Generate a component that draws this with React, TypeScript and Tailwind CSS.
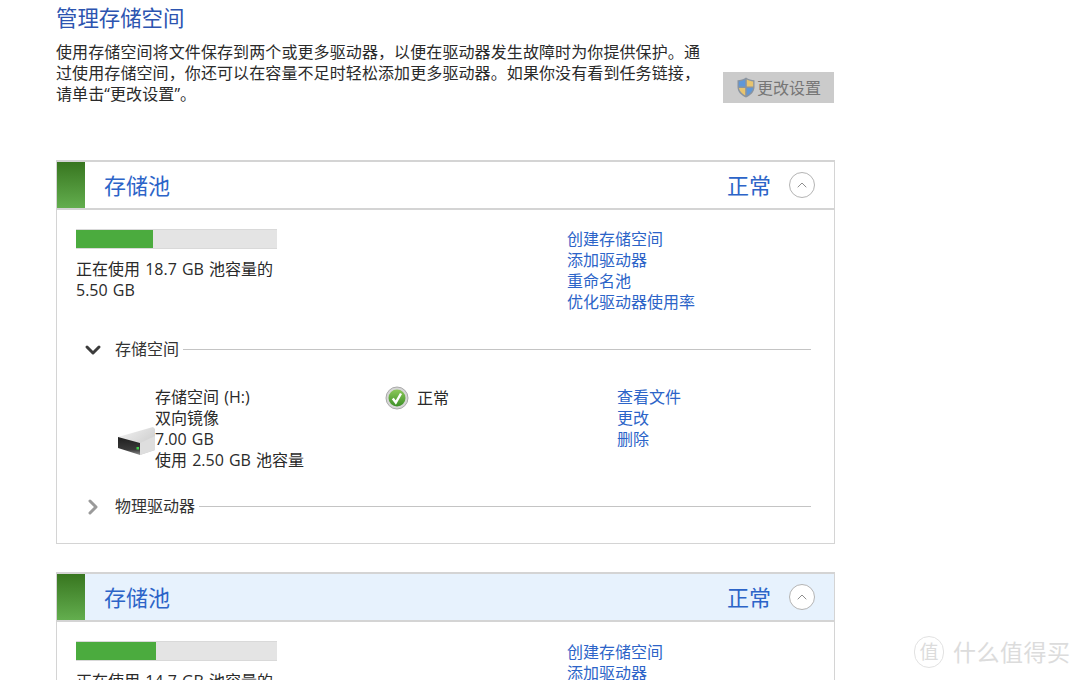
import { ChevronDown, ChevronRight, ChevronUp } from 'lucide-react'

const LINK = 'text-[#2c64c8]'

function PoolHeader({ tinted }: { tinted?: boolean }) {
  return (
    <div className={`flex h-[48px] items-center border-b-2 border-[#d4d4d4] ${tinted ? 'bg-[#e7f2fd]' : 'bg-white'}`}>
      <div className="h-full w-[28px] bg-gradient-to-b from-[#38761f] to-[#63ae4e]" />
      <span className={`ml-[19px] pb-px text-[22px] leading-[28px] ${LINK}`}>存储池</span>
      <span className={`ml-auto pb-px text-[22px] leading-[28px] ${LINK}`}>正常</span>
      <span className="ml-[18px] mr-[19px] flex h-[26px] w-[26px] items-center justify-center rounded-full border border-[#b4b4b4] bg-white">
        <ChevronUp size={16} strokeWidth={1.25} className="text-[#777]" />
      </span>
    </div>
  )
}

function UsageBar({ percent }: { percent: number }) {
  return (
    <div className="h-[20px] w-[201px] border-y border-[#d9d9d9] bg-[#e4e4e4]">
      <div className="h-full bg-[#4bab3e]" style={{ width: `${percent}%` }} />
    </div>
  )
}

function PoolLinks({ items }: { items: string[] }) {
  return (
    <div className={`flex flex-col text-[16px] leading-[21px] ${LINK}`}>
      {items.map((item) => (
        <span key={item}>{item}</span>
      ))}
    </div>
  )
}

function DriveIcon() {
  return (
    <svg width="42" height="32" viewBox="0 0 42 32" className="mb-[13px] shrink-0">
      <defs>
        <linearGradient id="driveTop" x1="0" y1="0" x2="1" y2="1">
          <stop offset="0" stopColor="#f4f4f4" />
          <stop offset="1" stopColor="#c2c2c2" />
        </linearGradient>
        <linearGradient id="driveFace" x1="0" y1="0" x2="0" y2="1">
          <stop offset="0" stopColor="#1f1f1f" />
          <stop offset="0.7" stopColor="#3a3a3a" />
          <stop offset="1" stopColor="#8f8f8f" />
        </linearGradient>
      </defs>
      <path d="M1 11 L36 1 L38 3 L38 24 L23 29 Z" fill="url(#driveTop)" />
      <path d="M1 11 L23 17 L23 29 L1 22 Z" fill="url(#driveFace)" />
      <path d="M23 17 L38 10 L38 24 L23 29 Z" fill="#dedede" />
      <rect x="19.5" y="21" width="2.5" height="2.5" fill="#3fd24a" />
    </svg>
  )
}

function StatusCheck() {
  return (
    <svg width="24" height="24" viewBox="0 0 24 24" className="shrink-0">
      <defs>
        <linearGradient id="checkFill" x1="0" y1="0" x2="0" y2="1">
          <stop offset="0" stopColor="#8cc85a" />
          <stop offset="1" stopColor="#3c8f26" />
        </linearGradient>
      </defs>
      <circle cx="12" cy="12" r="11" fill="#d6d6d6" stroke="#aaa" strokeWidth="1" />
      <circle cx="12" cy="12" r="8.5" fill="url(#checkFill)" />
      <path d="M7.8 12.5 L10.8 16.5 L16 7.5" fill="none" stroke="#fff" strokeWidth="2.4" />
    </svg>
  )
}

function ShieldIcon() {
  return (
    <svg width="20" height="21" viewBox="0 0 20 21" className="shrink-0">
      <path d="M10 0.5 C7.5 2.5 4.5 3.2 1.5 3.2 L1.5 10 C1.5 15 5.5 18.5 10 20.5 C14.5 18.5 18.5 15 18.5 10 L18.5 3.2 C15.5 3.2 12.5 2.5 10 0.5 Z" fill="#8a94a0" />
      <path d="M9.2 2.6 C7.2 3.8 5 4.3 2.8 4.4 L2.8 9.4 L9.2 9.4 Z" fill="#5f97d8" />
      <path d="M10.8 2.6 C12.8 3.8 15 4.3 17.2 4.4 L17.2 9.4 L10.8 9.4 Z" fill="#e8c46e" />
      <path d="M2.9 11 L9.2 11 L9.2 18.4 C6 16.8 3.4 14.2 2.9 11 Z" fill="#e8c46e" />
      <path d="M10.8 11 L17.1 11 C16.6 14.2 14 16.8 10.8 18.4 Z" fill="#5f97d8" />
    </svg>
  )
}

function SectionRule({ label, open }: { label: string; open?: boolean }) {
  return (
    <div className="flex h-[21px] items-center">
      <span className="flex h-[21px] w-[58px] shrink-0 items-center justify-center pl-[24px] pr-[10px]">
        {open ? (
          <ChevronDown size={24} strokeWidth={3} className="shrink-0 text-[#3c3c3c]" />
        ) : (
          <ChevronRight size={24} strokeWidth={3} className="shrink-0 text-[#9a9a9a]" />
        )}
      </span>
      <span className="text-[16px] leading-[21px] text-[#333]">{label}</span>
      <span className="ml-[4px] h-px flex-1 bg-[#c4c4c4]" />
    </div>
  )
}

export default function App() {
  return (
    <div
      className="relative h-[680px] w-[1080px] overflow-hidden bg-white pl-[56px] text-[#2a2a2a]"
      style={{ fontFamily: '"Open Sans", "Noto Sans CJK SC", sans-serif' }}
    >
      <h1 className="pt-[4px] text-[21.4px] leading-[28px] font-normal text-[#2c54b0]">管理存储空间</h1>

      <div className="mt-[10px] flex w-[779px] items-end">
        <p className="w-[650px] text-[16px] leading-[21px] tracking-[0.1px] text-[#2a2a2a]">
          使用存储空间将文件保存到两个或更多驱动器，以便在驱动器发生故障时为你提供保护。通过使用存储空间，你还可以在容量不足时轻松添加更多驱动器。如果你没有看到任务链接，请单击“更改设置”。
        </p>
        <button className="mr-px mb-[2px] ml-auto flex h-[31px] w-[111px] items-center justify-center bg-[#cbcbcb] text-[16px] text-[#767676]">
          <ShieldIcon />
          <span className="ml-px">更改设置</span>
        </button>
      </div>

      <section className="mt-[55px] h-[384px] w-[779px] border-2 border-[#d4d4d4] [border-left-width:1px] [border-right-width:1px] [border-bottom-width:1px]">
        <PoolHeader />
        <div className="flex pt-[19px] pl-[19px]">
          <div className="w-[491px]">
            <UsageBar percent={38.3} />
            <div className="mt-[10px] text-[16px] leading-[21px] [word-spacing:1px]">
              <div>正在使用 18.7 GB 池容量的</div>
              <div>5.50 GB</div>
            </div>
          </div>
          <PoolLinks items={['创建存储空间', '添加驱动器', '重命名池', '优化驱动器使用率']} />
        </div>

        <div className="mt-[26px] pr-[23px]">
          <SectionRule label="存储空间" open />
          <div className="mt-[27px] flex">
            <div className="flex w-[328px] shrink-0 items-end pl-[60px]">
              <DriveIcon />
              <div className="-ml-[4px] text-[16px] leading-[21px] [word-spacing:1px]">
                <div>存储空间 (H:)</div>
                <div>双向镜像</div>
                <div>7.00 GB</div>
                <div>使用 2.50 GB 池容量</div>
              </div>
            </div>
            <div className="flex h-[21px] w-[232px] shrink-0 items-center text-[16px]">
              <StatusCheck />
              <span className="ml-[8px]">正常</span>
            </div>
            <PoolLinks items={['查看文件', '更改', '删除']} />
          </div>
          <div className="mt-[25px]">
            <SectionRule label="物理驱动器" />
          </div>
        </div>
      </section>

      <section className="mt-[28px] w-[779px] border border-t-2 border-[#d4d4d4]">
        <PoolHeader tinted />
        <div className="flex pt-[19px] pl-[19px]">
          <div className="w-[491px]">
            <UsageBar percent={40} />
            <div className="mt-[10px] text-[16px] leading-[21px] [word-spacing:1px]">
              <div>正在使用 14.7 GB 池容量的</div>
            </div>
          </div>
          <div className="pt-px">
            <PoolLinks items={['创建存储空间', '添加驱动器']} />
          </div>
        </div>
      </section>

      <div className="absolute top-[636px] left-[914px] flex items-center text-[#dcdcdc]">
        <span className="flex h-[32px] w-[30px] items-center justify-center rounded-full border border-[#e2e2e2] text-[19px] leading-none">
          值
        </span>
        <span className="ml-[9px] text-[23px] leading-[32px] tracking-[0.5px]">什么值得买</span>
      </div>
    </div>
  )
}
